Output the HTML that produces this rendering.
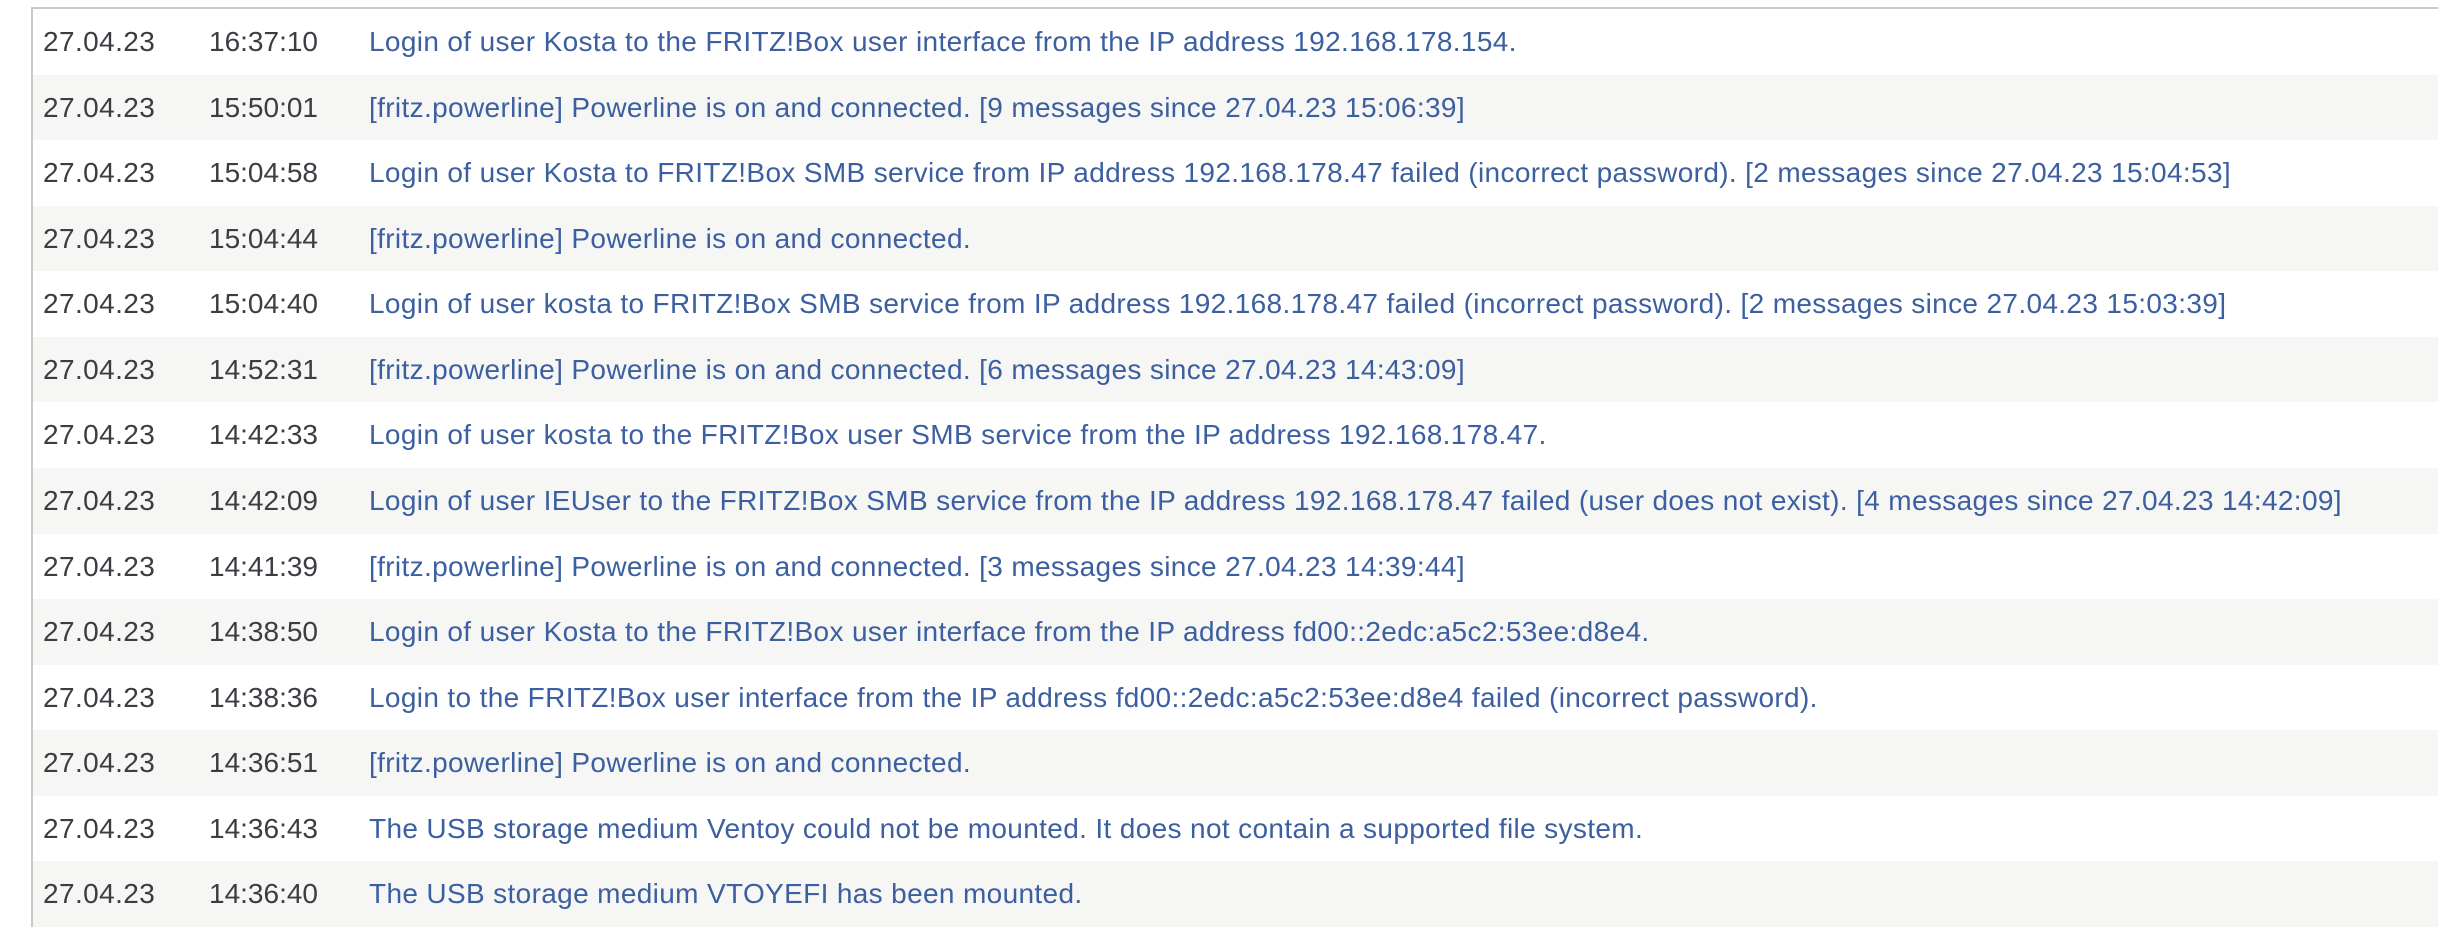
<!DOCTYPE html>
<html><head><meta charset="utf-8"><style>
html,body{margin:0;padding:0;background:#fff;width:2438px;height:936px;overflow:hidden}
.t{position:absolute;left:31px;top:7px;width:2420px;border-left:2px solid #c9c9c5;border-top:2px solid #c9c9c5}
.r{height:65.57px;position:relative;font-family:"Liberation Sans",sans-serif;font-size:28px;line-height:65.57px;white-space:nowrap}
.r:nth-child(even){background:#f6f6f4}
.r span{position:absolute;top:0}
.d{left:10px;color:#3a3d42;letter-spacing:0.4px}
.h{left:176px;color:#3a3d42}
.m{left:336px;color:#3b5fa0;letter-spacing:0.35px}
</style></head><body>
<div class="t">
<div class="r"><span class="d">27.04.23</span><span class="h">16:37:10</span><span class="m">Login of user Kosta to the FRITZ!Box user interface from the IP address 192.168.178.154.</span></div>
<div class="r"><span class="d">27.04.23</span><span class="h">15:50:01</span><span class="m">[fritz.powerline] Powerline is on and connected. [9 messages since 27.04.23 15:06:39]</span></div>
<div class="r"><span class="d">27.04.23</span><span class="h">15:04:58</span><span class="m">Login of user Kosta to FRITZ!Box SMB service from IP address 192.168.178.47 failed (incorrect password). [2 messages since 27.04.23 15:04:53]</span></div>
<div class="r"><span class="d">27.04.23</span><span class="h">15:04:44</span><span class="m">[fritz.powerline] Powerline is on and connected.</span></div>
<div class="r"><span class="d">27.04.23</span><span class="h">15:04:40</span><span class="m">Login of user kosta to FRITZ!Box SMB service from IP address 192.168.178.47 failed (incorrect password). [2 messages since 27.04.23 15:03:39]</span></div>
<div class="r"><span class="d">27.04.23</span><span class="h">14:52:31</span><span class="m">[fritz.powerline] Powerline is on and connected. [6 messages since 27.04.23 14:43:09]</span></div>
<div class="r"><span class="d">27.04.23</span><span class="h">14:42:33</span><span class="m">Login of user kosta to the FRITZ!Box user SMB service from the IP address 192.168.178.47.</span></div>
<div class="r"><span class="d">27.04.23</span><span class="h">14:42:09</span><span class="m">Login of user IEUser to the FRITZ!Box SMB service from the IP address 192.168.178.47 failed (user does not exist). [4 messages since 27.04.23 14:42:09]</span></div>
<div class="r"><span class="d">27.04.23</span><span class="h">14:41:39</span><span class="m">[fritz.powerline] Powerline is on and connected. [3 messages since 27.04.23 14:39:44]</span></div>
<div class="r"><span class="d">27.04.23</span><span class="h">14:38:50</span><span class="m">Login of user Kosta to the FRITZ!Box user interface from the IP address fd00::2edc:a5c2:53ee:d8e4.</span></div>
<div class="r"><span class="d">27.04.23</span><span class="h">14:38:36</span><span class="m">Login to the FRITZ!Box user interface from the IP address fd00::2edc:a5c2:53ee:d8e4 failed (incorrect password).</span></div>
<div class="r"><span class="d">27.04.23</span><span class="h">14:36:51</span><span class="m">[fritz.powerline] Powerline is on and connected.</span></div>
<div class="r"><span class="d">27.04.23</span><span class="h">14:36:43</span><span class="m">The USB storage medium Ventoy could not be mounted. It does not contain a supported file system.</span></div>
<div class="r"><span class="d">27.04.23</span><span class="h">14:36:40</span><span class="m">The USB storage medium VTOYEFI has been mounted.</span></div>
</div>
</body></html>
